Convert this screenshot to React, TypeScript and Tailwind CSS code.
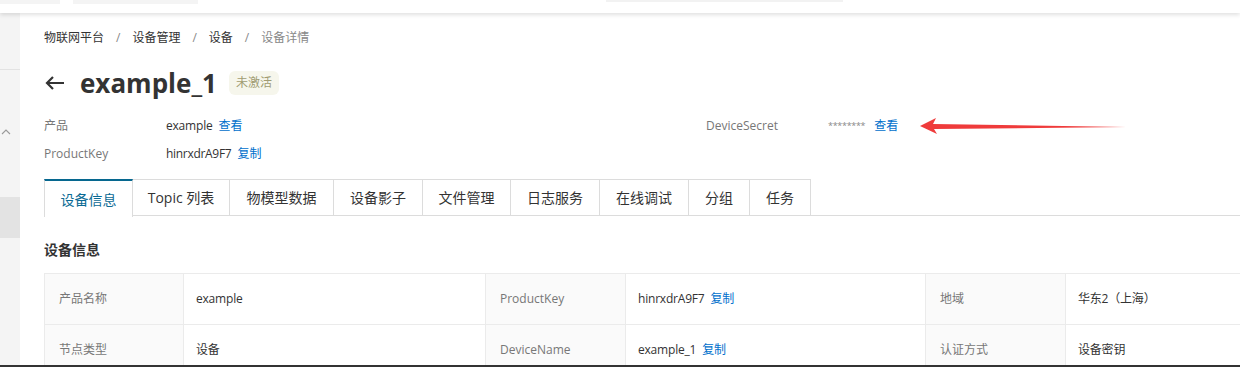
import React from "react";

const font = { fontFamily: '"Open Sans", "Noto Sans CJK SC", sans-serif' };

const tabs = ["设备信息", "Topic 列表", "物模型数据", "设备影子", "文件管理", "日志服务", "在线调试", "分组", "任务"];
const tabWidths = ["w-[89px]", "w-[97px]", "w-[104px]", "w-[89px]", "w-[88px]", "w-[89px]", "w-[89px]", "w-[61px]", "w-[61px]"];

function Link({ children }: { children: React.ReactNode }) {
  return <span className="ml-[6px] text-[#0070cc]">{children}</span>;
}

function Label({ children, w }: { children: React.ReactNode; w: string }) {
  return (
    <div className={`${w} shrink-0 h-full flex items-center pl-[14px] bg-[#fafafa] border-r border-[#ebebeb] text-[#777]`}>
      {children}
    </div>
  );
}

function Value({ children, w }: { children: React.ReactNode; w: string }) {
  return (
    <div className={`${w} shrink-0 h-full flex items-center pl-[12px] border-r border-[#ebebeb] text-[#333] tracking-[-0.2px]`}>
      {children}
    </div>
  );
}

export default function App() {
  return (
    <div style={font} className="w-[1240px] h-[367px] overflow-hidden bg-white flex flex-col text-[12px]">
      {/* top bar */}
      <div className="h-[13px] shrink-0 bg-white shadow-[0_2px_4px_rgba(0,0,0,0.12)] relative z-10 flex items-start">
        <div className="w-[60px] h-[4px] bg-[#f4f4f4]" />
        <div className="ml-[13px] w-[125px] h-[4px] bg-[#f4f4f4]" />
        <div className="ml-[408px] w-[237px] h-[2px] bg-[#f2f2f2]" />
      </div>

      <div className="flex flex-1 min-h-0">
        {/* sidebar */}
        <div className="w-[20px] shrink-0 bg-[#f4f4f4] flex flex-col">
          <div className="h-[57px] border-b border-[#e2e2e2]" />
          <div className="h-[58px]" />
          <svg width="10" height="8" viewBox="0 0 10 8" className="ml-[1px]">
            <path d="M1 6 L5 2 L9 6" fill="none" stroke="#999" strokeWidth="1.1" />
          </svg>
          <div className="h-[61px]" />
          <div className="h-[41px] bg-[#e3e3e3]" />
        </div>

        {/* main */}
        <div className="flex-1 min-w-0 pl-[24px] pt-[17px]">
          <div className="h-[16px] flex items-center text-[12px] text-[#333]">
            <span>物联网平台</span>
            <span className="mx-[12px] text-[#888]">/</span>
            <span>设备管理</span>
            <span className="mx-[12px] text-[#888]">/</span>
            <span>设备</span>
            <span className="mx-[12px] text-[#888]">/</span>
            <span className="text-[#888]">设备详情</span>
          </div>

          <div className="mt-[21px] h-[32px] flex items-center">
            <svg width="22" height="16" viewBox="0 0 22 16">
              <path d="M20 8 H3 M9 2 L3 8 L9 14" fill="none" stroke="#333" strokeWidth="2.2" />
            </svg>
            <span className="ml-[14px] text-[26px] font-bold text-[#333] leading-none">example_1</span>
            <span className="ml-[12px] h-[24px] px-[7px] flex items-center rounded-md bg-[#f6f6ec] text-[#a09c72] text-[12px]">
              未激活
            </span>
          </div>

          <div className="mt-[13px] flex text-[12px]">
            <div className="w-[662px]">
              <div className="h-[28px] flex items-center">
                <span className="w-[122px] text-[#777]">产品</span>
                <span className="text-[#333] tracking-[-0.2px]">example</span>
                <Link>查看</Link>
              </div>
              <div className="h-[28px] flex items-center">
                <span className="w-[122px] text-[#777]">ProductKey</span>
                <span className="text-[#333] tracking-[-0.3px]">hinrxdrA9F7</span>
                <Link>复制</Link>
              </div>
            </div>
            <div>
              <div className="h-[28px] flex items-center">
                <span className="w-[122px] text-[#777]">DeviceSecret</span>
                <span className="text-[#888] text-[9px] tracking-[-0.3px]">********</span>
                <span className="ml-[9px] text-[#0070cc]">查看</span>
                <svg width="210" height="20" viewBox="0 0 210 20" className="ml-[22px]">
                  <polygon points="0,10 16,2 13,8 206,11 14,13 17,18" fill="#ef3b3b" />
                </svg>
              </div>
            </div>
          </div>

          {/* tabs */}
          <div className="mt-[11px] flex h-[37px] border-b border-[#dcdcdc]">
            {tabs.map((t, i) => (
              <div
                key={t}
                className={`${tabWidths[i]} shrink-0 flex items-center justify-center text-[14px] border-r border-[#dcdcdc] ${
                  i === 0
                    ? "border-l border-t-2 border-t-[#06678f] text-[#0a6a94] bg-white h-[38px] -mb-[1px]"
                    : "border-t text-[#333]"
                }`}
              >
                {t}
              </div>
            ))}
          </div>

          <div className="mt-[23px] h-[20px] flex items-center text-[14px] font-bold text-[#333]">设备信息</div>

          {/* table */}
          <div className="mt-[14px] border-t border-l border-[#ebebeb] text-[12px]">
            <div className="h-[51px] flex border-b border-[#ebebeb]">
              <Label w="w-[139px]">产品名称</Label>
              <Value w="w-[302px]">example</Value>
              <Label w="w-[140px]">ProductKey</Label>
              <Value w="w-[300px]">
                hinrxdrA9F7<Link>复制</Link>
              </Value>
              <Label w="w-[140px]">地域</Label>
              <Value w="w-[200px]">华东2（上海）</Value>
            </div>
            <div className="h-[51px] flex border-b border-[#ebebeb]">
              <Label w="w-[139px]">节点类型</Label>
              <Value w="w-[302px]">设备</Value>
              <Label w="w-[140px]">DeviceName</Label>
              <Value w="w-[300px]">
                example_1<Link>复制</Link>
              </Value>
              <Label w="w-[140px]">认证方式</Label>
              <Value w="w-[200px]">设备密钥</Value>
            </div>
          </div>
        </div>
      </div>
      <div className="h-[2px] shrink-0 bg-[#333] -mt-[2px] relative z-10" />
    </div>
  );
}
